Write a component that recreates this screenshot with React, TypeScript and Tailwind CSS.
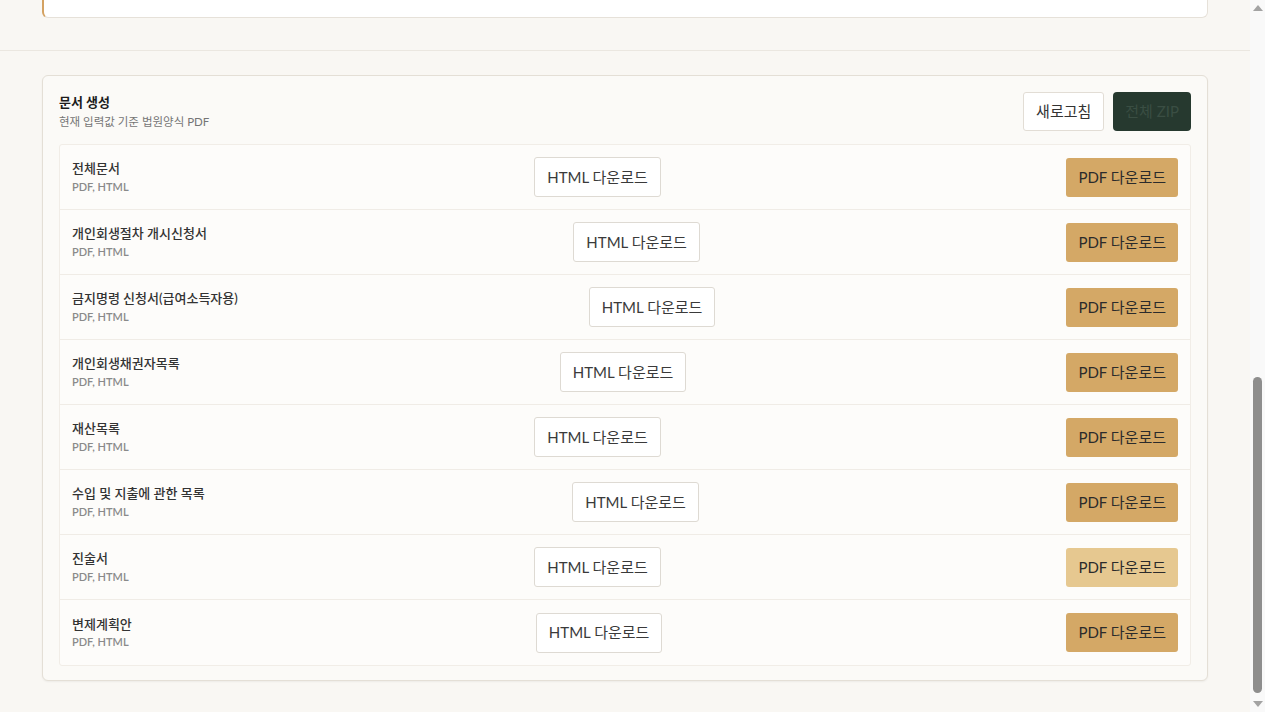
import { useLayoutEffect } from 'react'

const docs = [
  { name: '전체문서', light: false },
  { name: '개인회생절차 개시신청서', light: false },
  { name: '금지명령 신청서(급여소득자용)', light: false },
  { name: '개인회생채권자목록', light: false },
  { name: '재산목록', light: false },
  { name: '수입 및 지출에 관한 목록', light: false },
  { name: '진술서', light: true },
  { name: '변제계획안', light: false },
]

const font = { fontFamily: 'Lato, "Noto Sans CJK KR", sans-serif' }

// 창 오른쪽 스크롤바 (headless 에서는 숨겨지므로 직접 그림)
const ScrollBar = () => (
  <div className="fixed top-0 right-0 h-screen w-[15px] bg-[#f9f9f9]">
    <div className="absolute top-[5px] left-[3px] h-0 w-0 border-x-[5px] border-b-[6px] border-x-transparent border-b-[#a3a3a3]" />
    <div className="absolute top-[377px] left-[3px] h-[316px] w-[9px] rounded-full bg-[#8e8e8e]" />
    <div className="absolute bottom-[5px] left-[3px] h-0 w-0 border-x-[5px] border-t-[6px] border-x-transparent border-t-[#a3a3a3]" />
  </div>
)

const App = () => {
  useLayoutEffect(() => {
    // 문서 생성 섹션이 보이도록 맨 아래로 스크롤
    window.scrollTo(0, document.documentElement.scrollHeight)
  }, [])

  return (
    <div className="min-h-screen bg-[#f9f7f3] text-[#2b2b2b]" style={font}>
      <div className="mr-[15px]">
        {/* 이전 섹션 */}
        <section className="border-b border-[#ebe7e0] px-[42px] pt-8 pb-8">
          <div className="h-[300px] rounded-md border border-[#e6e1d9] bg-white" />
          <div className="mt-6 h-[460px] rounded-md border border-[#e6e1d9] border-l-2 border-l-[#d4a262] bg-white" />
        </section>

        {/* 문서 생성 */}
        <section className="px-[42px] pt-6 pb-[31px]">
          <div className="rounded-md border border-[#e4dfd6] bg-[#fbfaf7] px-4 pt-4 pb-[14px] shadow-[0_1px_2px_rgba(0,0,0,0.05)]">
            <div className="mb-[13px] flex items-center justify-between">
              <div className="leading-normal">
                <div className="text-[13px] font-bold text-[#1c1c1c]">문서 생성</div>
                <div className="text-[11.5px] text-[#757575]">현재 입력값 기준 법원양식 PDF</div>
              </div>
              <div className="flex items-center gap-[9px]">
                <button className="h-[39px] rounded-[3px] border border-[#e2ddd5] bg-white px-3 text-[15px] text-[#333]">
                  새로고침
                </button>
                <button
                  disabled
                  className="h-[39px] rounded-[4px] bg-[#26392f] px-3 text-[15px] text-[#3a4e43]"
                >
                  전체 ZIP
                </button>
              </div>
            </div>

            <div className="rounded-[3px] border border-[#f1ede7] bg-[#fdfcfa]">
              {docs.map((doc, i) => (
                <div
                  key={doc.name}
                  className={`flex h-[65px] items-center justify-between px-3 ${
                    i < docs.length - 1 ? 'border-b border-[#f0ece6]' : ''
                  }`}
                >
                  <div className="leading-normal">
                    <div className="text-[13px] font-medium text-[#333]">{doc.name}</div>
                    <div className="text-[11px] font-semibold text-[#8a8a8a]">PDF, HTML</div>
                  </div>
                  <button className="h-10 rounded-[3px] border border-[#dedad3] bg-white px-3 text-[15px] text-[#3a3a3a]">
                    HTML 다운로드
                  </button>
                  <button
                    className={`h-[39px] rounded-[3px] px-3 text-[15px] text-[#2b2b2b] ${
                      doc.light ? 'bg-[#e6c890]' : 'bg-[#d4a866]'
                    }`}
                  >
                    PDF 다운로드
                  </button>
                </div>
              ))}
            </div>
          </div>
        </section>
      </div>
      <ScrollBar />
    </div>
  )
}

export default App
